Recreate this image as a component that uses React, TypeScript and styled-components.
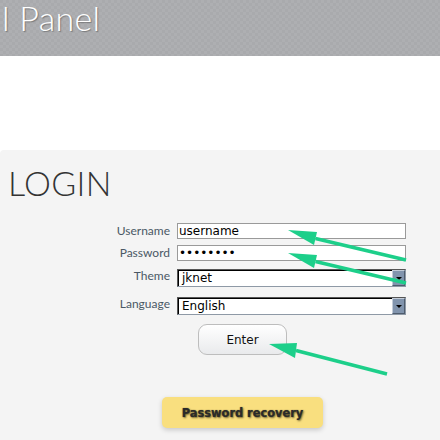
import React from "react";
import styled, { createGlobalStyle } from "styled-components";

const Global = createGlobalStyle`
  html, body { margin: 0; padding: 0; background: #ffffff; }
  body { width: 440px; height: 440px; overflow: hidden; font-family: "DejaVu Sans", sans-serif; }
`;

const Page = styled.div`
  position: relative;
  width: 440px;
  height: 440px;
  display: flex;
  flex-direction: column;
`;

const Header = styled.header`
  height: 56px;
  flex: none;
  background-color: #acadb0;
  background-image: repeating-conic-gradient(#aeafb2 0 25%, #a9aaad 0 50%);
  background-size: 6px 6px;
  padding-left: 2px;
`;

const Title = styled.h1`
  margin: 0;
  font-family: Lato, "Open Sans", sans-serif;
  font-weight: 300;
  font-size: 34px;
  line-height: 36px;
  letter-spacing: 0.3px;
  color: #ffffff;
  text-shadow: 1px 1px 1px rgba(60, 60, 60, 0.45);
  white-space: nowrap;
`;

const Spacer = styled.div`
  height: 94px;
  flex: none;
`;

const Panel = styled.main`
  flex: 1;
  background: #f4f4f4;
  border-top-left-radius: 4px;
  padding: 16px 0 0 8px;
  display: flex;
  flex-direction: column;
`;

const Heading = styled.h2`
  margin: 0;
  font-family: Lato, "Open Sans", sans-serif;
  font-weight: 300;
  font-size: 34px;
  line-height: 34px;
  color: #333333;
  letter-spacing: 0.3px;
`;

const Form = styled.form`
  margin-top: 23px;
  display: flex;
  flex-direction: column;
`;

const Row = styled.div<{ $gap: number; $top?: boolean }>`
  display: grid;
  grid-template-columns: 162px 229px;
  column-gap: 7px;
  align-items: ${(p) => (p.$top ? "start" : "center")};
  margin-top: ${(p) => p.$gap}px;
`;

const Label = styled.label`
  text-align: right;
  font-family: Lato, "Open Sans", sans-serif;
  font-weight: 400;
  font-size: 12px;
  line-height: 14px;
  color: #4a5865;
`;

const TextInput = styled.input`
  box-sizing: border-box;
  width: 229px;
  height: 16px;
  margin: 0;
  padding: 0 1px;
  border: 1px solid #9a9a9a;
  background: #ffffff;
  font-family: "DejaVu Sans", sans-serif;
  font-size: 12px;
  color: #000000;
  outline: none;
`;

const SelectBox = styled.div`
  box-sizing: border-box;
  width: 229px;
  height: 18px;
  display: flex;
  border: 1px solid #8e99a6;
  border-top-color: #555;
  border-left-color: #555;
  box-shadow: inset 1px 1px 0 #000;
  background: #ffffff;
`;

const SelectValue = styled.span`
  flex: 1;
  padding: 1px 0 0 4px;
  font-family: "DejaVu Sans", sans-serif;
  font-size: 12px;
  line-height: 15px;
  color: #000000;
`;

const ArrowButton = styled.span`
  box-sizing: border-box;
  width: 13px;
  height: 16px;
  background: #8194ad;
  border: 1px solid;
  border-color: #c3ccd8 #4f5d6e #4f5d6e #c3ccd8;
  display: flex;
  align-items: center;
  justify-content: center;
  &::after {
    content: "";
    border-left: 3px solid transparent;
    border-right: 3px solid transparent;
    border-top: 3px solid #000;
  }
`;

const EnterButton = styled.button`
  box-sizing: border-box;
  margin: 9px 0 0 190px;
  width: 89px;
  height: 31px;
  border: 1px solid #bdbdbd;
  border-radius: 9px;
  background: linear-gradient(#ffffff, #e9eaec);
  font-family: "DejaVu Sans", sans-serif;
  font-size: 12px;
  color: #111;
  cursor: pointer;
`;

const RecoveryButton = styled.button`
  box-sizing: border-box;
  margin: 42px 0 0 154px;
  width: 161px;
  height: 31px;
  border: none;
  border-radius: 5px;
  background: #f9df7f;
  box-shadow: 0 2px 5px rgba(0, 0, 0, 0.18);
  font-family: "DejaVu Sans", sans-serif;
  font-weight: 900;
  font-size: 11.4px;
  color: #2a2a2a;
  text-shadow: 1px 1px 2px rgba(50, 40, 10, 0.7), 0 0 1px rgba(0, 0, 0, 0.5);
  cursor: pointer;
`;

const Annotations = styled.svg`
  position: absolute;
  left: 0;
  top: 0;
  width: 440px;
  height: 440px;
  pointer-events: none;
`;

const GREEN = "#1dcf8a";

const Arrow: React.FC<{ tip: [number, number]; a: [number, number]; b: [number, number]; end: [number, number] }> = ({ tip, a, b, end }) => {
  const mid: [number, number] = [(a[0] + b[0]) / 2, (a[1] + b[1]) / 2];
  return (
    <g>
      <line x1={mid[0]} y1={mid[1]} x2={end[0]} y2={end[1]} stroke={GREEN} strokeWidth={3.5} />
      <polygon points={`${tip[0]},${tip[1]} ${a[0]},${a[1]} ${b[0]},${b[1]}`} fill={GREEN} />
    </g>
  );
};

export default function App() {
  return (
    <Page>
      <Global />
      <Header>
        <Title>l Panel</Title>
      </Header>
      <Spacer />
      <Panel>
        <Heading>LOGIN</Heading>
        <Form onSubmit={(e) => e.preventDefault()}>
          <Row $gap={0}>
            <Label>Username</Label>
            <TextInput type="text" defaultValue="username" />
          </Row>
          <Row $gap={6}>
            <Label>Password</Label>
            <TextInput type="password" defaultValue="12345678" />
          </Row>
          <Row $gap={8} $top>
            <Label>Theme</Label>
            <SelectBox>
              <SelectValue>jknet</SelectValue>
              <ArrowButton />
            </SelectBox>
          </Row>
          <Row $gap={10} $top>
            <Label>Language</Label>
            <SelectBox>
              <SelectValue>English</SelectValue>
              <ArrowButton />
            </SelectBox>
          </Row>
          <EnterButton type="submit">Enter</EnterButton>
          <RecoveryButton type="button">Password recovery</RecoveryButton>
        </Form>
      </Panel>
      <Annotations viewBox="0 0 440 440">
        <Arrow tip={[288, 230]} a={[317, 232]} b={[314, 245]} end={[406, 260]} />
        <Arrow tip={[288, 253]} a={[317, 255]} b={[314, 268]} end={[406, 283]} />
        <Arrow tip={[269, 344]} a={[297, 343]} b={[295, 358]} end={[387, 374]} />
      </Annotations>
    </Page>
  );
}
